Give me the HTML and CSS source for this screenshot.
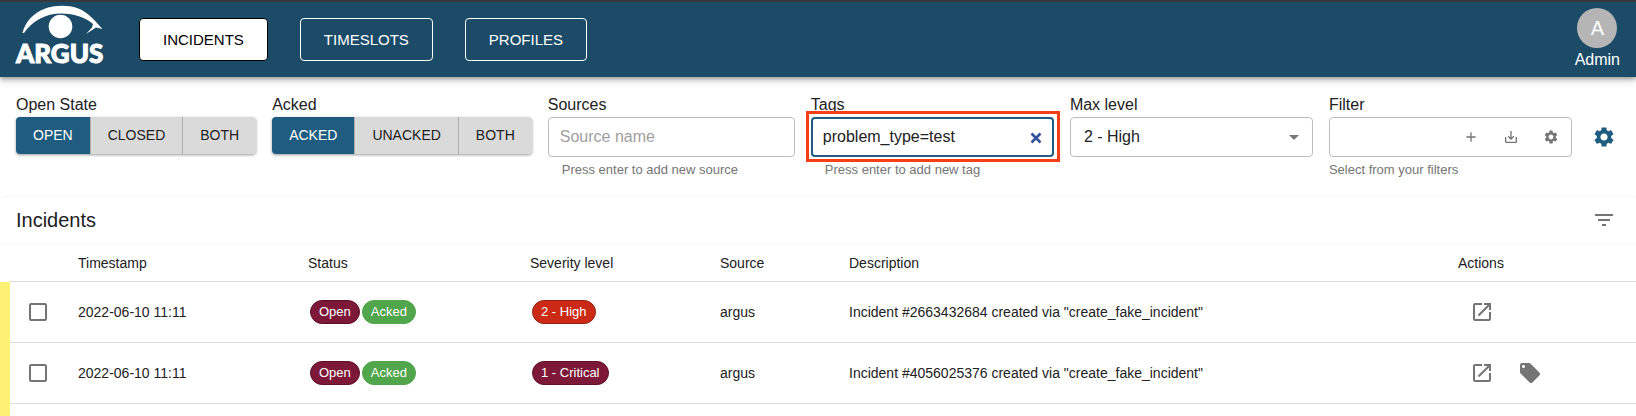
FILE: index.html
```html
<!DOCTYPE html>
<html lang="en">
<head>
<meta charset="utf-8">
<title>Argus - Incidents</title>
<link rel="stylesheet" href="styles.css">
</head>
<body>
<svg class="sprite" aria-hidden="true">
  <symbol id="gear" viewBox="0 0 24 24"><path d="M19.14 12.94c.04-.3.06-.61.06-.94 0-.32-.02-.64-.07-.94l2.03-1.58c.18-.14.23-.41.12-.61l-1.92-3.32c-.12-.22-.37-.29-.59-.22l-2.39.96c-.5-.38-1.03-.7-1.62-.94l-.36-2.54c-.04-.24-.24-.41-.48-.41h-3.84c-.24 0-.43.17-.47.41l-.36 2.54c-.59.24-1.13.57-1.62.94l-2.39-.96c-.22-.08-.47 0-.59.22L2.74 8.87c-.12.21-.08.47.12.61l2.03 1.58c-.05.3-.09.63-.09.94s.02.64.07.94l-2.03 1.58c-.18.14-.23.41-.12.61l1.92 3.32c.12.22.37.29.59.22l2.39-.96c.5.38 1.03.7 1.62.94l.36 2.54c.05.24.24.41.48.41h3.84c.24 0 .44-.17.47-.41l.36-2.54c.59-.24 1.13-.56 1.62-.94l2.39.96c.22.08.47 0 .59-.22l1.92-3.32c.12-.22.07-.47-.12-.61l-2.01-1.58zM12 15.6c-1.98 0-3.6-1.62-3.6-3.6s1.62-3.6 3.6-3.6 3.6 1.62 3.6 3.6-1.62 3.6-3.6 3.6z"/></symbol>
  <symbol id="open" viewBox="0 0 24 24"><path d="M19 19H5V5h7V3H5c-1.11 0-2 .9-2 2v14c0 1.1.89 2 2 2h14c1.1 0 2-.9 2-2v-7h-2v7zM14 3v2h3.59l-9.83 9.83 1.41 1.41L19 6.41V10h2V3h-7z"/></symbol>
</svg>

<header class="appbar">
  <a class="logo" href="#" aria-label="Argus home">
    <svg class="logo-eye" viewBox="20 5 84 34" aria-hidden="true">
      <path d="M22.5 33C25 21 35 12.500 44 9C54 5 68 5 77 8C89 12.500 95 21 102.500 29L96 27.500L86 34L92 27.500L93 24C86 18 75 13.500 61 13.500C46 13.500 32 21 24 33Z"/>
      <circle cx="60.500" cy="26.500" r="11.800"/>
    </svg>
    <span class="logo-name">ARGUS</span>
  </a>
  <nav class="nav">
    <a class="nav-link nav-link-active" href="#">INCIDENTS</a>
    <a class="nav-link" href="#">TIMESLOTS</a>
    <a class="nav-link" href="#">PROFILES</a>
  </nav>
  <button class="account" type="button"><span class="avatar">A</span><span>Admin</span></button>
</header>

<main>
  <form class="filters">
    <div class="field" role="group" aria-labelledby="open-label">
      <span class="label" id="open-label">Open State</span>
      <div class="toggle">
        <button class="toggle-item selected" type="button">OPEN</button>
        <button class="toggle-item" type="button">CLOSED</button>
        <button class="toggle-item" type="button">BOTH</button>
      </div>
    </div>
    <div class="field" role="group" aria-labelledby="acked-label">
      <span class="label" id="acked-label">Acked</span>
      <div class="toggle">
        <button class="toggle-item selected" type="button">ACKED</button>
        <button class="toggle-item" type="button">UNACKED</button>
        <button class="toggle-item" type="button">BOTH</button>
      </div>
    </div>
    <div class="field">
      <label class="label" for="sources">Sources</label>
      <div class="box"><input class="input" id="sources" type="text" placeholder="Source name"></div>
      <span class="helper helper-indent">Press enter to add new source</span>
    </div>
    <div class="field">
      <label class="label" for="tags">Tags</label>
      <div class="box box-focused">
        <input class="input" id="tags" type="text" value="problem_type=test">
        <button class="clear" type="button" aria-label="Clear tags"><svg width="12" height="12" viewBox="0 0 12 12"><path d="M1.500 1.500L10.500 10.500M10.500 1.500L1.500 10.500" fill="none" stroke="currentColor" stroke-width="2.600"/></svg></button>
      </div>
      <span class="helper helper-indent">Press enter to add new tag</span>
    </div>
    <div class="field">
      <label class="label" for="level">Max level</label>
      <div class="box">
        <select class="input select" id="level"><option>2 - High</option></select>
        <svg class="arrow" width="24" height="24" viewBox="0 0 24 24" aria-hidden="true"><path d="M7 10l5 5 5-5z"/></svg>
      </div>
    </div>
    <div class="field">
      <label class="label" for="filter">Filter</label>
      <div class="box">
        <input class="input" id="filter" type="text">
        <button class="tool" type="button" aria-label="Add filter"><svg width="16" height="16" viewBox="0 0 24 24"><path d="M19 13h-6v6h-2v-6H5v-2h6V5h2v6h6v2z"/></svg></button>
        <button class="tool" type="button" aria-label="Save filter"><svg width="16" height="16" viewBox="0 0 24 24"><path d="M19 12v7H5v-7H3v7c0 1.100.9 2 2 2h14c1.100 0 2-.9 2-2v-7h-2zm-6 .67l2.590-2.580L17 11.500l-5 5-5-5 1.410-1.410L11 12.670V3h2z"/></svg></button>
        <button class="tool" type="button" aria-label="Manage filters"><svg width="16" height="16"><use href="#gear"/></svg></button>
      </div>
      <span class="helper">Select from your filters</span>
    </div>
    <button class="settings" type="button" aria-label="Settings"><svg width="24" height="24"><use href="#gear"/></svg></button>
  </form>

  <section class="panel">
    <div class="panel-head">
      <h1 class="title">Incidents</h1>
      <button class="list-button" type="button" aria-label="Filter list"><svg width="24" height="24" viewBox="0 0 24 24"><path d="M10 18h4v-2h-4v2zM3 6v2h18V6H3zm3 7h12v-2H6v2z"/></svg></button>
    </div>
    <table class="table">
      <colgroup><col class="c-mark"><col class="c-check"><col class="c-time"><col class="c-status"><col class="c-level"><col class="c-source"><col><col class="c-actions"></colgroup>
      <thead>
        <tr><td class="mark-head"></td><td></td><th>Timestamp</th><th>Status</th><th>Severity level</th><th>Source</th><th>Description</th><th>Actions</th></tr>
      </thead>
      <tbody>
        <tr>
          <td class="mark"></td>
          <td class="check-cell"><input class="check" type="checkbox" aria-label="Select incident 2663432684"></td>
          <td>2022-06-10 11:11</td>
          <td><div class="chips"><span class="chip critical">Open</span><span class="chip acked">Acked</span></div></td>
          <td><div class="chips"><span class="chip high">2 - High</span></div></td>
          <td>argus</td>
          <td>Incident #2663432684 created via "create_fake_incident"</td>
          <td><div class="actions"><a class="action" href="#" aria-label="Open incident"><svg width="24" height="24"><use href="#open"/></svg></a></div></td>
        </tr>
        <tr>
          <td class="mark"></td>
          <td class="check-cell"><input class="check" type="checkbox" aria-label="Select incident 4056025376"></td>
          <td>2022-06-10 11:11</td>
          <td><div class="chips"><span class="chip critical">Open</span><span class="chip acked">Acked</span></div></td>
          <td><div class="chips"><span class="chip critical">1 - Critical</span></div></td>
          <td>argus</td>
          <td>Incident #4056025376 created via "create_fake_incident"</td>
          <td><div class="actions"><a class="action" href="#" aria-label="Open incident"><svg width="24" height="24"><use href="#open"/></svg></a><a class="action" href="#" aria-label="Ticket"><svg width="24" height="24" viewBox="0 0 24 24"><path d="M21.410 11.580l-9-9C12.050 2.220 11.550 2 11 2H4c-1.100 0-2 .9-2 2v7c0 .55.22 1.050.59 1.420l9 9c.36.36.86.58 1.410.58.55 0 1.050-.22 1.410-.59l7-7c.37-.36.59-.86.59-1.410 0-.55-.23-1.060-.59-1.420zM5.500 7C4.670 7 4 6.330 4 5.500S4.670 4 5.500 4 7 4.670 7 5.500 6.330 7 5.500 7z"/></svg></a></div></td>
        </tr>
        <tr class="row-end"><td class="mark"></td><td colspan="7"></td></tr>
      </tbody>
    </table>
  </section>
</main>
</body>
</html>
```
FILE: styles.css
```css
* {
  box-sizing: border-box;
}

body {
  margin: 0;
  background: #fff;
  color: #212121;
  font-family: "Liberation Sans", Arial, sans-serif;
  font-size: 16px;
  line-height: 24px;
}

button,
input,
select {
  margin: 0;
  padding: 0;
  border: 0;
  background: none;
  color: inherit;
  font: inherit;
}

svg {
  display: block;
  fill: currentColor;
}

.sprite {
  display: none;
}

.appbar {
  display: flex;
  align-items: center;
  min-height: 77px;
  padding: 0 16px;
  border-top: 2px solid #38393b;
  background: #1c4b68;
  color: #fff;
  box-shadow: 0 2px 4px rgba(0, 0, 0, 0.3), 0 4px 8px rgba(0, 0, 0, 0.15);
}

.logo {
  display: flex;
  flex-direction: column;
  align-self: flex-start;
  width: 88px;
  margin-right: 35px;
  padding-top: 3px;
  color: #fff;
  text-decoration: none;
}

.logo-eye {
  width: 84px;
  height: 34px;
  margin-left: 4px;
}

.logo-name {
  font-family: Lato, "Liberation Sans", sans-serif;
  font-size: 26px;
  font-weight: 900;
  line-height: 28px;
  -webkit-text-stroke: 1px #fff;
}

.nav {
  display: flex;
  gap: 32px;
}

.nav-link {
  padding: 8px 23px;
  border: 1px solid #fff;
  border-radius: 4px;
  color: #fff;
  font-size: 15px;
  line-height: 25px;
  text-decoration: none;
}

.nav-link-active {
  border-color: #000;
  background: #fff;
  color: #000;
}

.account {
  display: flex;
  flex-direction: column;
  align-items: center;
  margin-left: auto;
}

.avatar {
  width: 40px;
  height: 40px;
  border-radius: 50%;
  background: #b5b5b5;
  font-size: 20px;
  line-height: 40px;
}

.filters {
  display: grid;
  grid-template-columns: auto auto minmax(0, 247fr) repeat(3, minmax(0, 243fr)) 32px;
  gap: 16px;
  padding: 16px;
}

.field {
  display: flex;
  flex-direction: column;
}

.toggle {
  display: flex;
  margin-bottom: auto;
  border-radius: 4px;
  box-shadow: 0 1px 3px rgba(0, 0, 0, 0.4);
}

.toggle-item {
  padding: 6px 17px;
  border-left: 1px solid #aeaeae;
  background: #dadada;
  font-size: 14px;
  line-height: 25px;
}

.toggle-item:first-child {
  padding-left: 16px;
  border-radius: 4px 0 0 4px;
}

.toggle-item:last-child {
  border-radius: 0 4px 4px 0;
}

.toggle-item.selected {
  border-left-color: #205c80;
  background: #205c80;
  color: #fff;
}

.box {
  position: relative;
  display: flex;
  align-items: center;
  height: 40px;
  border: 1px solid #bdbdbd;
  border-radius: 4px;
}

.box-focused {
  border: 2px solid #205c80;
}

.box-focused::after {
  content: "";
  position: absolute;
  inset: -8px -8px -7px -7px;
  border: 3px solid #f43f17;
  pointer-events: none;
}

.input {
  flex: 1;
  min-width: 0;
  height: 100%;
  padding: 0 11px;
  outline: 0;
}

.box-focused .input {
  padding: 0 10px;
}

.input::placeholder {
  color: #a0a0a0;
  opacity: 1;
}

.select {
  appearance: none;
  padding: 0 32px 0 13px;
}

.arrow {
  position: absolute;
  right: 6px;
  color: #757575;
  pointer-events: none;
}

.clear {
  padding: 2px 10px 0;
  color: #32509a;
}

.tool {
  display: grid;
  place-items: center;
  width: 40px;
  height: 100%;
  color: #757575;
}

.helper {
  margin-top: 3px;
  color: #757575;
  font-size: 13px;
  line-height: 20px;
}

.helper-indent {
  margin-left: 14px;
}

.settings {
  display: grid;
  place-items: center;
  height: 40px;
  margin-top: 24px;
  color: #205c80;
}

.panel-head {
  display: flex;
  align-items: center;
  justify-content: space-between;
  height: 48px;
  padding: 0 20px 2px 16px;
  border-top: 1px solid #f7f7f7;
  border-radius: 4px 4px 0 0;
}

.title {
  margin: 0;
  font-size: 20px;
  font-weight: 400;
}

.list-button {
  color: #757575;
}

.table {
  width: 100%;
  border-spacing: 0;
  border-top: 1px solid #f7f7f7;
  table-layout: fixed;
  font-size: 14px;
  line-height: 20px;
}

.c-mark {
  width: 10px;
}

.c-check {
  width: 52px;
}

.c-time {
  width: 230px;
}

.c-status {
  width: 222px;
}

.c-level {
  width: 190px;
}

.c-source {
  width: 129px;
}

.c-actions {
  width: 194px;
}

.table th,
.table td {
  height: 61px;
  padding: 0 16px;
  border-bottom: 1px solid #dcdcdc;
  font-weight: 400;
  text-align: left;
}

.table thead th,
.table thead td {
  height: 37px;
}

.table td.mark,
.table td.mark-head {
  padding: 0;
  border-bottom: 0;
}

.table td.mark {
  background: #fdf173;
}

.table .row-end td {
  height: 12px;
  border-bottom: 0;
}

.table td.check-cell {
  padding: 0 0 0 4px;
}

.check {
  display: block;
  width: 18px;
  height: 18px;
  margin: 0 auto;
  border: 2px solid #757575;
  border-radius: 2px;
  appearance: none;
}

.chips {
  display: flex;
  gap: 2px;
  padding-left: 2px;
}

.chip {
  padding: 0 8px;
  border: 1px solid;
  border-radius: 12px;
  color: #fff;
  font-size: 13px;
  line-height: 22px;
}

.critical {
  border-color: #5d1029;
  background: #7d1838;
}

.acked {
  border-color: #51a54b;
  background: #51a54b;
}

.high {
  border-color: #96210f;
  background: #cb2b15;
}

.actions {
  display: flex;
}

.action {
  display: grid;
  place-items: center;
  width: 48px;
  height: 48px;
  color: #757575;
}
```
